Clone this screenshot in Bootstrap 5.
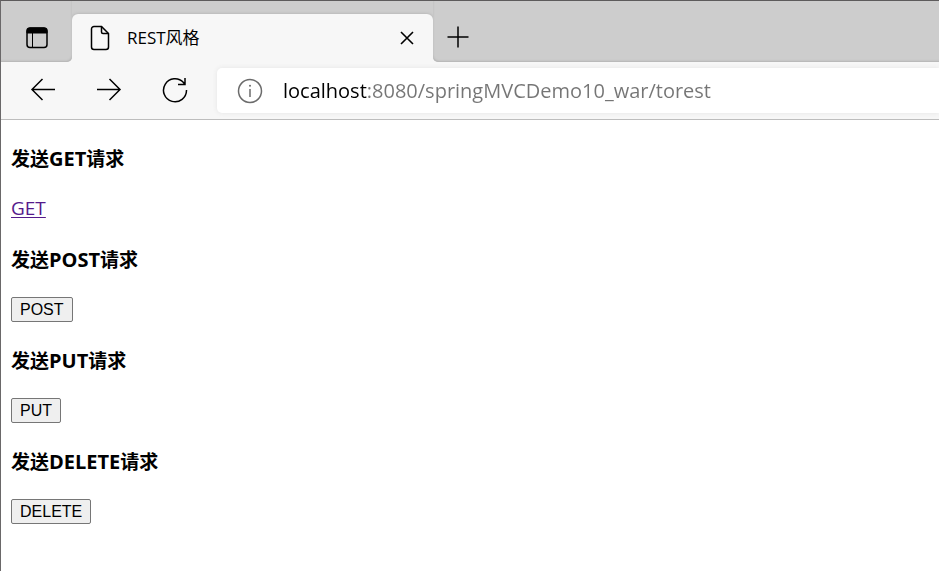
<!DOCTYPE html>
<html lang="zh-CN">
<head>
<meta charset="utf-8">
<meta name="viewport" content="width=device-width, initial-scale=1">
<title>REST风格</title>
<link href="https://cdn.jsdelivr.net/npm/bootstrap@5.3.0/dist/css/bootstrap.min.css" rel="stylesheet">
<style>
  body { font-family: "Open Sans", "Noto Sans CJK SC", sans-serif; color: #000; }
  .browser { border-top: 1px solid #5d5b5c; border-left: 1px solid #6a6869; }
  .tab-strip { background: #f7f7f7; height: 61px; }
  .strip-part { background: #cdcdcd; padding-top: 13px; }
  .strip-start { border-radius: 0 0 5px 0; box-shadow: inset -1px -2px 2px -1px #b4b4b4; padding-left: 24px; padding-right: 23px; }
  .strip-end { border-radius: 0 0 0 5px; box-shadow: inset 1px -2px 2px -1px #b4b4b4; padding-left: 14px; }
  .icon-btn { background: none; border: 0; padding: 0; color: #000; line-height: 1; }
  .icon-btn svg, .page-tab svg { display: block; }
  svg { fill: none; stroke: currentColor; }
  .page-tab { background: #f7f7f7; width: 361px; height: 48px; padding: 0 18px; border-radius: 6px 6px 0 0; font-size: 17px; box-shadow: 0 0 3px #aaa; clip-path: inset(-4px 0 0 0); }
  .tab-title { margin-left: 17px; }
  .toolbar { background: #f7f7f7; height: 58px; padding: 6px 0 6px 28px; border-bottom: 1px solid #bdbdbd; }
  .nav-icons { gap: 38px; margin-right: 28px; padding-bottom: 2px; }
  .address { background: #fff; height: 45px; padding-left: 20px; border-radius: 5px 0 0 5px; box-shadow: 0 0 5px #e4e4e4; }
  .site-info { color: #6b6b6b; margin-right: 20px; }
  .url-input { border: 0; outline: 0; padding: 0; height: 36px; font-size: 20px; min-width: 0; color: transparent; background: linear-gradient(90deg, #000 84px, #757575 84px); -webkit-background-clip: text; background-clip: text; }
  .page-content { padding: 27px 10px; }
  .page-content h2 { font-size: 19px; line-height: 25px; font-weight: 700; margin-bottom: 24px; }
  .page-content h2 span { font-size: 20px; line-height: 1; }
  .request { height: 27px; margin-bottom: 25px; }
  .request a { display: block; width: fit-content; color: #551a8b; font-size: 19px; line-height: 25px; text-underline-offset: 2px; }
  .request button { display: block; font-family: "Liberation Sans", Arial, sans-serif; font-size: 16px; line-height: 21px; color: #000; background: #efefef; border: 1px solid #767676; border-radius: 2px; padding: 1px 8px; height: 25px; }
</style>
</head>
<body>
<div class="browser min-vh-100 bg-white">
  <header>
    <div class="tab-strip d-flex">
      <div class="strip-part strip-start d-flex align-items-center">
        <button class="icon-btn" type="button" aria-label="标签操作">
          <svg width="24" height="24" viewBox="0 0 24 24"><rect x="2" y="2" width="20" height="19.5" rx="3" stroke-width="1.5"/><path d="M2 7V5a3 3 0 0 1 3-3h14a3 3 0 0 1 3 3v2z" fill="currentColor"/><path d="M7.500 7v14"/></svg>
        </button>
      </div>
      <div class="strip-part">
        <div class="page-tab d-flex align-items-center">
          <svg width="20" height="26" viewBox="0 0 20 26" stroke-width="1.5"><path d="M4 1.500h7.500l7 7V22a2.500 2.500 0 0 1-2.500 2.500H4A2.500 2.500 0 0 1 1.500 22V4A2.500 2.500 0 0 1 4 1.500z"/><path d="M11.500 1.500V7A1.500 1.500 0 0 0 13 8.500h5.500"/></svg>
          <span class="tab-title flex-grow-1">REST风格</span>
          <button class="icon-btn" type="button" aria-label="关闭标签页">
            <svg width="16" height="16" viewBox="0 0 16 16" stroke-width="1.6"><path d="M2 2l12 12M14 2L2 14"/></svg>
          </button>
        </div>
      </div>
      <div class="strip-part strip-end d-flex align-items-center flex-grow-1">
        <button class="icon-btn" type="button" aria-label="新建标签页">
          <svg width="22" height="24" viewBox="0 0 22 24" stroke-width="1.5"><path d="M11 0.500v21M0.500 11h21"/></svg>
        </button>
      </div>
    </div>
    <div class="toolbar d-flex align-items-center">
      <nav class="nav-icons d-flex">
        <button class="icon-btn" type="button" aria-label="后退"><svg width="28" height="26" viewBox="0 0 28 26" stroke-width="1.5"><path d="M26 12.500H3M13.500 2L3 12.500 13.500 23"/></svg></button>
        <button class="icon-btn" type="button" aria-label="前进"><svg width="28" height="26" viewBox="0 0 28 26" stroke-width="1.5"><path d="M2 12.500h23M14.500 2L25 12.500 14.500 23"/></svg></button>
        <button class="icon-btn" type="button" aria-label="刷新"><svg width="28" height="26" viewBox="0 0 28 26" stroke-width="1.5"><path d="M25.500 13A11.500 11.500 0 1 1 22.500 5.500L24 7.500M24 1v6.500h-7"/></svg></button>
      </nav>
      <div class="address d-flex align-items-center flex-grow-1">
        <button class="icon-btn site-info" type="button" aria-label="查看站点信息"><svg width="26" height="26" viewBox="0 0 26 26" stroke-width="1.500"><circle cx="13" cy="13" r="11.500"/><path d="M13 11v8"/><circle cx="13" cy="7.800" r="1" fill="currentColor" stroke="none"/></svg></button>
        <input class="url-input flex-grow-1" type="text" aria-label="地址栏" value="localhost:8080/springMVCDemo10_war/torest">
      </div>
    </div>
  </header>
  <main class="page-content">
    <h2>发送<span>GET</span>请求</h2>
    <div class="request"><a href="#get">GET</a></div>
    <h2>发送<span>POST</span>请求</h2>
    <form class="request"><button type="button">POST</button></form>
    <h2>发送<span>PUT</span>请求</h2>
    <form class="request"><button type="button">PUT</button></form>
    <h2>发送<span>DELETE</span>请求</h2>
    <form class="request mb-0"><button type="button">DELETE</button></form>
  </main>
</div>
<script src="https://cdn.jsdelivr.net/npm/bootstrap@5.3.0/dist/js/bootstrap.bundle.min.js"></script>
</body>
</html>
